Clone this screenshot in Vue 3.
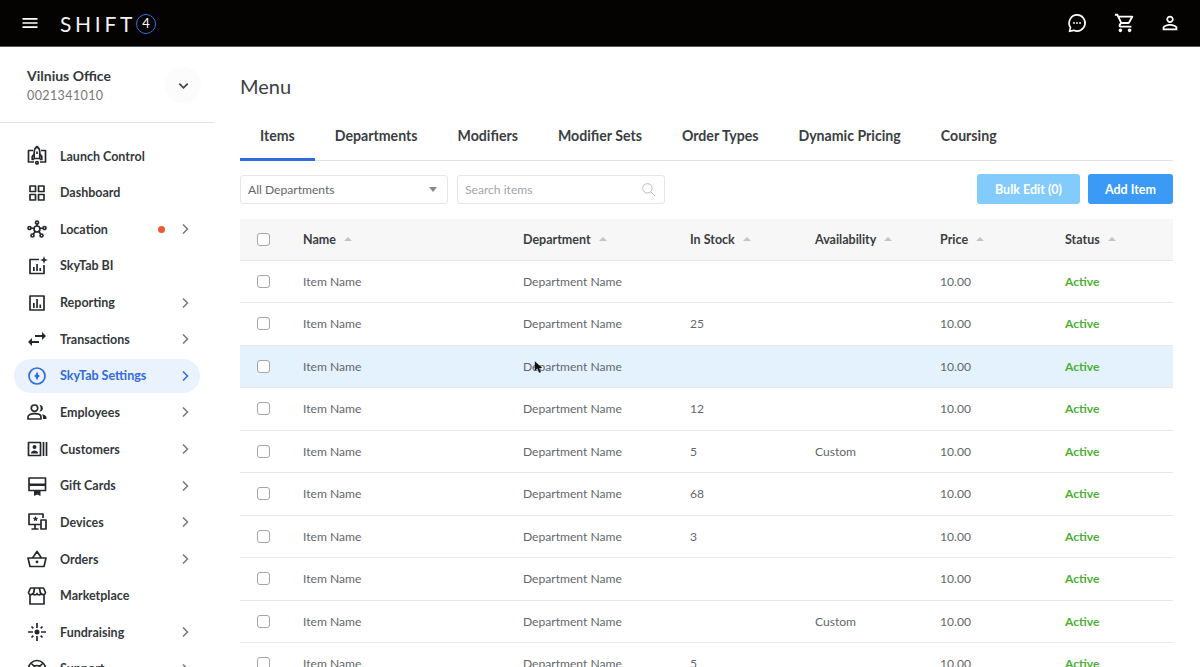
<template>
  <div class="page">
    <header class="topbar">
      <svg class="menu-icon" viewBox="0 0 24 24"><path d="M3 18h18v-2H3v2zm0-5h18v-2H3v2zm0-7v2h18V6H3z" /></svg>
      <div class="logo">
        <span class="logo-text">SHIFT</span>
        <span class="logo-four">4</span>
      </div>
      <div class="top-actions">
        <svg viewBox="0 0 24 24" class="top-icon chat">
          <path class="outline" d="M12 3.200a8.800 8.800 0 1 1-3.600 16.800L4 21l.9-4.100A8.800 8.800 0 0 1 12 3.200z" />
          <circle cx="8.700" cy="12" r="1" /><circle cx="12" cy="12" r="1" /><circle cx="15.300" cy="12" r="1" />
        </svg>
        <svg viewBox="0 0 24 24" class="top-icon">
          <path d="M15.550 13c.75 0 1.410-.41 1.750-1.030l3.580-6.490c.37-.66-.11-1.480-.87-1.480H5.210l-.94-2H1v2h2l3.600 7.590-1.350 2.440C4.520 15.370 5.480 17 7 17h12v-2H7l1.100-2h7.450zM6.160 6h12.150l-2.760 5H8.530L6.160 6zM7 18c-1.100 0-1.990.9-1.990 2S5.900 22 7 22s2-.9 2-2-.9-2-2-2zm10 0c-1.100 0-1.990.9-1.990 2s.89 2 1.990 2 2-.9 2-2-.9-2-2-2z" />
        </svg>
        <svg viewBox="0 0 24 24" class="top-icon">
          <path d="M12 5.900c1.160 0 2.100.94 2.100 2.100s-.94 2.100-2.100 2.100S9.900 9.160 9.900 8s.94-2.100 2.100-2.100m0 9c2.970 0 6.100 1.460 6.100 2.100v1.100H5.900V17c0-.64 3.130-2.100 6.100-2.100M12 4C9.790 4 8 5.790 8 8s1.790 4 4 4 4-1.790 4-4-1.790-4-4-4zm0 9c-2.670 0-8 1.340-8 4v3h16v-3c0-2.660-5.330-4-8-4z" />
        </svg>
      </div>
    </header>

    <div class="body">
      <aside class="sidebar">
        <div class="account">
          <div>
            <div class="account-name">Vilnius Office</div>
            <div class="account-id">0021341010</div>
          </div>
          <div class="account-toggle">
            <svg viewBox="0 0 16 16"><path d="M3.500 6l4.500 4.500L12.500 6" /></svg>
          </div>
        </div>
        <nav class="nav">
          <a v-for="item in nav" :key="item.label" class="nav-item" :class="{ active: item.active }">
            <svg class="nav-icon" viewBox="0 0 24 24">
              <path v-if="item.line" class="line" :d="item.line" />
              <path v-if="item.solid" class="solid" :d="item.solid" />
            </svg>
            <span class="nav-label">{{ item.label }}</span>
            <span v-if="item.dot" class="dot"></span>
            <svg v-if="item.arrow" class="chevron" viewBox="0 0 16 16"><path d="M6 3.500l4.500 4.500L6 12.500" /></svg>
          </a>
        </nav>
      </aside>

      <main class="main">
        <h1 class="title">Menu</h1>
        <div class="tabs">
          <div v-for="(tab, i) in tabs" :key="tab" class="tab" :class="{ current: i === 0 }">{{ tab }}</div>
        </div>

        <div class="toolbar">
          <div class="select">
            <span>All Departments</span>
            <span class="caret"></span>
          </div>
          <div class="search">
            <span>Search items</span>
            <svg viewBox="0 0 16 16"><circle cx="6.800" cy="6.800" r="5" /><path d="M10.500 10.500L15 15" /></svg>
          </div>
          <button class="btn bulk">Bulk Edit (0)</button>
          <button class="btn add">Add Item</button>
        </div>

        <div class="table">
          <div class="row head">
            <span class="check"></span>
            <span v-for="col in columns" :key="col" class="col-head">{{ col }}<i class="sort"></i></span>
          </div>
          <div v-for="(row, i) in rows" :key="i" class="row" :class="{ hover: i === 2 }">
            <span class="check"></span>
            <span>Item Name</span>
            <span>Department Name</span>
            <span>{{ row.stock }}</span>
            <span>{{ row.avail }}</span>
            <span>10.00</span>
            <span class="status">Active</span>
            <svg v-if="i === 2" class="cursor" viewBox="0 0 12 16"><path d="M1 1v11.500l3-2.700 2 4.700 2-.9-2-4.500h4z" /></svg>
          </div>
        </div>
      </main>
    </div>
  </div>
</template>

<script setup>
const nav = [
  {
    label: 'Launch Control',
    line: 'M8 6.500H3.500V18H9M16 6.500h4.500V18H15M12 2.500c2 1.500 2.800 3.500 2.800 6v6H9.200v-6c0-2.500.8-4.500 2.800-6zM9.200 10l-2 2.500v3h2M14.800 10l2 2.500v3h-2M12 17.500a1.300 1.300 0 1 0 0 2.600 1.300 1.300 0 0 0 0-2.600zM12 7.500v2.500',
  },
  {
    label: 'Dashboard',
    line: 'M5 5h5.500v5.500H5zM13.500 5H19v5.500h-5.500zM5 13.500h5.500V19H5zM13.500 13.500H19V19h-5.500z',
  },
  {
    label: 'Location',
    dot: true,
    arrow: true,
    line: 'M12 9a3 3 0 1 0 0 6 3 3 0 0 0 0-6zM12 4a1.500 1.500 0 1 0 0 3 1.500 1.500 0 0 0 0-3zM4.500 9.500a1.500 1.500 0 1 0 0 3 1.500 1.500 0 0 0 0-3zM19.500 9.500a1.500 1.500 0 1 0 0 3 1.500 1.500 0 0 0 0-3zM7.500 17a1.500 1.500 0 1 0 0 3 1.500 1.500 0 0 0 0-3zM16.500 17a1.500 1.500 0 1 0 0 3 1.500 1.500 0 0 0 0-3zM12 7v2M6 11l3.200.3M18 11l-3.200.3M8.500 17l1.500-2.300M15.500 17L14 14.700',
  },
  {
    label: 'SkyTab BI',
    line: 'M14 5.500H5v14h14V11',
    solid: 'M8 13h1.700v4H8zM11.200 10h1.700v7h-1.700zM14.400 14h1.700v3h-1.700zM19 2l1 3 3 1-3 1-1 3-1-3-3-1 3-1z',
  },
  {
    label: 'Reporting',
    arrow: true,
    line: 'M5 5h14v14H5z',
    solid: 'M8 12h1.700v5H8zM11.200 8h1.700v9h-1.700zM14.400 13.500h1.700V17h-1.700z',
  },
  {
    label: 'Transactions',
    arrow: true,
    solid: 'M6.990 11L3 15l3.990 4v-3H14v-2H6.990v-3zM21 9l-3.990-4v3H10v2h7.010v3L21 9z',
  },
  {
    label: 'SkyTab Settings',
    arrow: true,
    active: true,
    line: 'M12 4a8 8 0 1 0 0 16 8 8 0 0 0 0-16z',
    solid: 'M12 7.500l1.300 3.200 1.700 1.300-1.700 1.300-1.300 3.200-1.300-3.200L9 12l1.700-1.300z',
  },
  {
    label: 'Employees',
    arrow: true,
    line: 'M9.500 5a3.200 3.200 0 1 0 0 6.400 3.200 3.200 0 0 0 0-6.400zM3 19v-2c0-2 3-3.300 6.500-3.300S16 15 16 17v2z',
    solid: 'M14.500 4.800c2.200.2 3.400 1.700 3.400 3.500s-1.200 3.300-3.400 3.500c.8-1 1.200-2.200 1.200-3.500s-.4-2.500-1.200-3.500zM18 14.500c2 .6 3.500 1.700 3.500 3V19H18v-2c0-1-.3-1.800-1-2.500z',
  },
  {
    label: 'Customers',
    arrow: true,
    line: 'M3.500 5.500h12v13h-12zM18.500 5v14M21.500 5v14',
    solid: 'M9.500 8a2 2 0 1 1 0 4 2 2 0 0 1 0-4zM6 16c0-1.500 2-2.500 3.500-2.500S13 14.500 13 16v.5H6z',
  },
  {
    label: 'Gift Cards',
    arrow: true,
    line: 'M4 4h16.500v12.500H4zM4 11h16.500',
    solid: 'M9 16.500h6.500V22l-3.200-1.500L9 22zM4 9.500h16.500v2.500H4z',
  },
  {
    label: 'Devices',
    arrow: true,
    line: 'M15.500 14.500H4V4h14v4M10 14.500V19M6.500 19h7M16 10h5v9h-5z',
    solid: 'M10.500 6l.8 1.800 1.900.2-1.400 1.300.4 1.900-1.700-1-1.700 1 .4-1.900L7.800 8l1.900-.2z',
  },
  {
    label: 'Orders',
    arrow: true,
    line: 'M3 11h18l-2 8.500H5zM7.500 11L12 4.500l4.500 6.500',
    solid: 'M12 13.500a1.400 1.400 0 1 1 0 2.800 1.400 1.400 0 0 1 0-2.800z',
  },
  {
    label: 'Marketplace',
    line: 'M5.500 4h13l2 4.500a2.300 2.300 0 0 1-4.300 1 2.300 2.300 0 0 1-4.200 0 2.300 2.300 0 0 1-4.200 0 2.300 2.300 0 0 1-4.300-1zM5 11v9h14v-9M9.500 4.500l-1 5M14.500 4.500l1 5',
  },
  {
    label: 'Fundraising',
    arrow: true,
    line: 'M12 3v5M12 16v5M3 12h5M16 12h5M6.500 6.500l1.800 1.800M15.700 15.700l1.800 1.800M17.500 6.500l-1.800 1.800M8.300 15.700l-1.800 1.800',
    solid: 'M12 9.500a2.500 2.500 0 1 1 0 5 2.500 2.500 0 0 1 0-5z',
  },
  {
    label: 'Support',
    arrow: true,
    line: 'M12 3.500a8.500 8.500 0 1 0 0 17 8.500 8.500 0 0 0 0-17zM12 8.500a3.500 3.500 0 1 0 0 7 3.500 3.500 0 0 0 0-7zM6 6l3.500 3.500M18 6l-3.500 3.500M6 18l3.500-3.500M18 18l-3.500-3.500',
  },
]

const tabs = ['Items', 'Departments', 'Modifiers', 'Modifier Sets', 'Order Types', 'Dynamic Pricing', 'Coursing']
const columns = ['Name', 'Department', 'In Stock', 'Availability', 'Price', 'Status']
const rows = [
  { stock: '', avail: '' },
  { stock: '25', avail: '' },
  { stock: '', avail: '' },
  { stock: '12', avail: '' },
  { stock: '5', avail: 'Custom' },
  { stock: '68', avail: '' },
  { stock: '3', avail: '' },
  { stock: '', avail: '' },
  { stock: '', avail: 'Custom' },
  { stock: '5', avail: '' },
]
</script>

<style>
html,
body {
  margin: 0;
  overflow: hidden;
  background: #fff;
}
</style>

<style scoped>
.page {
  height: 667px;
  overflow: hidden;
  display: flex;
  flex-direction: column;
  font-family: Lato, 'Open Sans', sans-serif;
  font-size: 12.100px;
  color: #63676c;
}

.topbar {
  flex: none;
  height: 46px;
  display: flex;
  align-items: center;
  background: #050202;
  border-bottom: 1px solid #55595c;
  padding: 0 19px 0 20px;
}

.menu-icon {
  width: 20px;
  height: 20px;
  fill: #fff;
}

.logo {
  display: flex;
  align-items: center;
  margin-left: 20px;
}

.logo-text {
  color: #f2f2f2;
  font-size: 21px;
  letter-spacing: 3.700px;
}

.logo-four {
  box-sizing: border-box;
  width: 20px;
  height: 20px;
  margin-top: 2px;
  border: 1.500px solid #2f6fe8;
  border-radius: 50%;
  color: #fff;
  font-size: 13px;
  line-height: 17px;
  text-align: center;
}

.top-actions {
  margin-left: auto;
  display: flex;
  gap: 23px;
}

.top-icon {
  width: 22px;
  height: 22px;
  fill: #fff;
}

.top-icon.chat {
  margin-right: 3px;
}

.top-icon .outline {
  fill: none;
  stroke: #fff;
  stroke-width: 1.800;
}

.body {
  flex: 1;
  display: flex;
  min-height: 0;
}

.sidebar {
  flex: none;
  width: 214px;
}

.account {
  height: 76px;
  box-sizing: border-box;
  padding: 20px 13px 0 27px;
  display: flex;
  justify-content: space-between;
  border-bottom: 1px solid #e4e4e4;
}

.account-name {
  color: #33383c;
  font-size: 14px;
  font-weight: 700;
  line-height: 18px;
}

.account-id {
  margin-top: 2px;
  font-size: 12.500px;
  letter-spacing: 0.400px;
  line-height: 18px;
  color: #777;
}

.account-toggle {
  width: 36px;
  height: 36px;
  border-radius: 50%;
  background: #fcfcfc;
  display: flex;
  align-items: center;
  justify-content: center;
}

.account-toggle svg {
  width: 15px;
  height: 15px;
  fill: none;
  stroke: #444;
  stroke-width: 1.800;
}

.nav {
  padding-top: 16px;
  display: flex;
  flex-direction: column;
  gap: 2.650px;
}

.nav-item {
  flex: none;
  height: 34px;
  margin: 0 14px;
  padding: 0 7px 0 11px;
  display: flex;
  align-items: center;
  border-radius: 17px;
  color: #33383c;
  font-size: 12.500px;
  font-weight: 700;
}

.nav-item.active {
  background: #eaf2fe;
  color: #2f6bdc;
}

.nav-icon {
  flex: none;
  width: 24px;
  height: 24px;
  margin-right: 11px;
}

.nav-icon .line {
  fill: none;
  stroke: #26292c;
  stroke-width: 1.700;
  stroke-linejoin: round;
}

.nav-icon .solid {
  fill: #26292c;
}

.active .nav-icon .line {
  stroke: #2f6bdc;
}

.active .nav-icon .solid {
  fill: #2f6bdc;
}

.nav-label {
  flex: 1;
}

.dot {
  width: 7px;
  height: 7px;
  margin-right: 12px;
  border-radius: 50%;
  background: #ee5a30;
}

.chevron {
  width: 16px;
  height: 16px;
  fill: none;
  stroke: #777;
  stroke-width: 1.500;
}

.active .chevron {
  stroke: #2f6bdc;
}

.main {
  flex: 1;
  min-width: 0;
  padding: 0 27px 0 26px;
}

.title {
  margin: 27px 0 0;
  font-size: 20px;
  font-weight: 400;
  line-height: 24px;
  color: #3c4044;
}

.tabs {
  margin-top: 18px;
  height: 44px;
  display: flex;
  border-bottom: 1px solid #e2e2e2;
}

.tab {
  box-sizing: border-box;
  height: 45px;
  padding: 11px 20px 0;
  font-size: 14.150px;
  font-weight: 700;
  color: #3a3e42;
}

.tab.current {
  border-bottom: 3px solid #2f6bdc;
}

.toolbar {
  margin-top: 13px;
  display: flex;
  align-items: center;
  gap: 9px;
}

.select,
.search {
  box-sizing: border-box;
  width: 208px;
  height: 29px;
  padding: 0 8px 0 7px;
  display: flex;
  align-items: center;
  justify-content: space-between;
  border: 1px solid #e6e6e6;
  border-radius: 3px;
}

.search {
  color: #a2a5a8;
}

.search svg {
  width: 15px;
  height: 15px;
  fill: none;
  stroke: #b5b5b5;
  stroke-width: 1;
}

.caret {
  margin-right: 2px;
  border-left: 4px solid transparent;
  border-right: 4px solid transparent;
  border-top: 5px solid #888;
}

.btn {
  height: 30px;
  border: 0;
  border-radius: 3px;
  color: #fff;
  font-family: inherit;
  font-size: 12.500px;
  font-weight: 700;
}

.bulk {
  width: 103px;
  margin-left: auto;
  background: #82cbfa;
}

.add {
  width: 85px;
  margin-left: -1px;
  background: #3b9af5;
}

.table {
  margin-top: 15px;
}

.row {
  position: relative;
  box-sizing: border-box;
  height: 42.500px;
  display: grid;
  grid-template-columns: 63px 220px 167px 125px 125px 125px 1fr;
  align-items: center;
  border-bottom: 1px solid #e8e8e8;
}

.row.head {
  height: 41.500px;
  background: #f7f7f7;
  color: #3a3e42;
  font-size: 12.500px;
  font-weight: 700;
}

.row.hover {
  background: #e3f2fd;
}

.check {
  box-sizing: border-box;
  width: 13px;
  height: 13px;
  margin-left: 17px;
  background: #fff;
  border: 1px solid #a5a5a5;
  border-radius: 3px;
}

.col-head {
  display: flex;
  align-items: center;
}

.sort {
  margin-left: 8px;
  border-left: 4px solid transparent;
  border-right: 4px solid transparent;
  border-bottom: 4px solid #c4c4c4;
}

.status {
  color: #4caf35;
  font-weight: 700;
}

.cursor {
  position: absolute;
  left: 294px;
  top: 14px;
  width: 10px;
  height: 14px;
  fill: #111;
}
</style>
